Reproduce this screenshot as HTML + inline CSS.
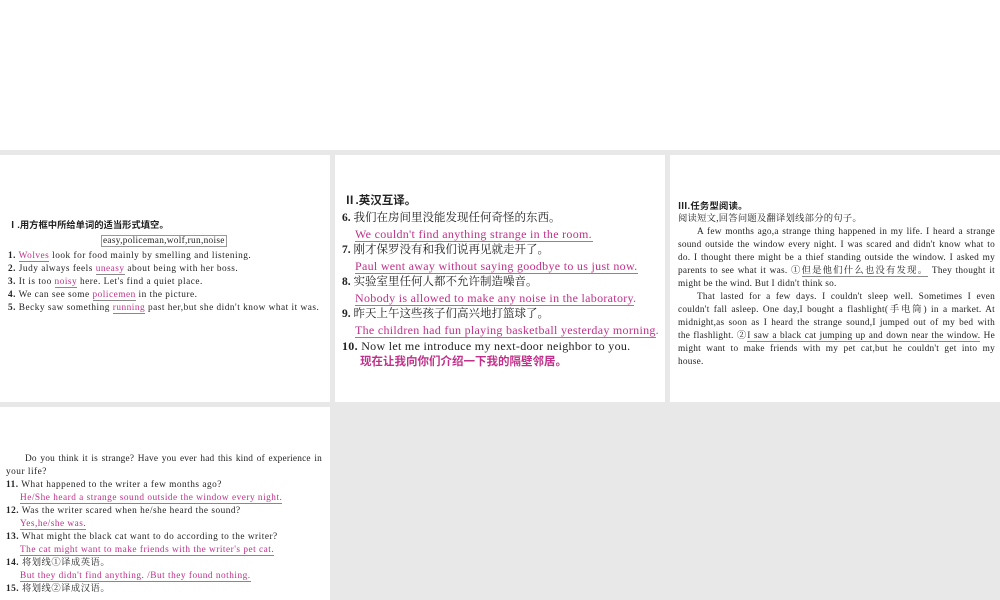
<!DOCTYPE html>
<html><head><meta charset="utf-8"><style>
*{margin:0;padding:0}
body{width:1000px;height:600px;background:#e8e8e8;position:relative;overflow:hidden;font-family:"Liberation Serif","Noto Serif CJK SC",serif;color:#222}
.p{position:absolute;background:#fff}
.l{position:absolute;white-space:nowrap;font-size:9.3px;line-height:10px;letter-spacing:0.25px}
.w .l{letter-spacing:0.5px}
.j{text-align:justify;text-align-last:justify;white-space:normal}
.m{color:#c0308a}
.u{border-bottom:1px solid #888}
b{font-family:"Liberation Serif","Noto Sans CJK SC",serif}
h{font-family:"Liberation Sans","Noto Sans CJK SC",sans-serif;font-weight:bold}
.big .l{font-size:11.5px;line-height:13px;letter-spacing:0}
.big .e{font-size:12px;letter-spacing:0.3px}
</style></head><body>
<div class="p" style="left:0;top:0;width:1000px;height:150px"></div>
<div class="p w" style="left:0;top:155px;width:330px;height:247px">
<div class="l" style="left:8px;top:65px;letter-spacing:0"><h>Ⅰ.用方框中所给单词的适当形式填空。</h></div>
<div class="l" style="left:101px;top:80px;border:1px solid #999;padding:0 1px;letter-spacing:0.3px">easy,policeman,wolf,run,noise</div>
<div class="l" style="left:8px;top:96px"><b>1.</b> <span class="m u">Wolves</span> look for food mainly by smelling and listening.</div>
<div class="l" style="left:8px;top:109px"><b>2.</b> Judy always feels <span class="m u">uneasy</span> about being with her boss.</div>
<div class="l" style="left:8px;top:122px"><b>3.</b> It is too <span class="m u">noisy</span> here. Let's find a quiet place.</div>
<div class="l" style="left:8px;top:135px"><b>4.</b> We can see some <span class="m u">policemen</span> in the picture.</div>
<div class="l" style="left:8px;top:148px"><b>5.</b> Becky saw something <span class="m u">running</span> past her,but she didn't know what it was.</div>
</div>
<div class="p big" style="left:335px;top:155px;width:330px;height:247px">
<div class="l" style="left:9px;top:40px"><h>Ⅱ.英汉互译。</h></div>
<div class="l" style="left:7px;top:57px"><b>6.</b> 我们在房间里没能发现任何奇怪的东西。</div>
<div class="l m u e" style="left:20px;top:73px;width:238px">We couldn't find anything strange in the room.</div>
<div class="l" style="left:7px;top:89px"><b>7.</b> 刚才保罗没有和我们说再见就走开了。</div>
<div class="l m u e" style="left:20px;top:105px;width:283px">Paul went away without saying goodbye to us just now.</div>
<div class="l" style="left:7px;top:121px"><b>8.</b> 实验室里任何人都不允许制造噪音。</div>
<div class="l m u e" style="left:20px;top:137px;width:279px">Nobody is allowed to make any noise in the laboratory.</div>
<div class="l" style="left:7px;top:153px"><b>9.</b> 昨天上午这些孩子们高兴地打篮球了。</div>
<div class="l m u e" style="left:20px;top:169px;width:301px">The children had fun playing basketball yesterday morning.</div>
<div class="l e" style="left:7px;top:185px"><b>10.</b> Now let me introduce my next-door neighbor to you.</div>
<div class="l m" style="left:25px;top:201px"><h>现在让我向你们介绍一下我的隔壁邻居。</h></div>
</div>
<div class="p" style="left:670px;top:155px;width:330px;height:247px">
<div class="l" style="left:8px;top:46px"><h>Ⅲ.任务型阅读。</h></div>
<div class="l" style="left:8px;top:59px">阅读短文,回答问题及翻译划线部分的句子。</div>
<div class="l j" style="left:27px;top:72px;width:298px">A few months ago,a strange thing happened in my life. I heard a strange</div>
<div class="l j" style="left:8px;top:85px;width:317px">sound outside the window every night. I was scared and didn't know what to</div>
<div class="l j" style="left:8px;top:98px;width:317px">do. I thought there might be a thief standing outside the window. I asked my</div>
<div class="l j" style="left:8px;top:111px;width:317px">parents to see what it was. ①<span class="u">但是他们什么也没有发现。</span> They thought it</div>
<div class="l" style="left:8px;top:124px">might be the wind. But I didn't think so.</div>
<div class="l j" style="left:27px;top:137px;width:298px">That lasted for a few days. I couldn't sleep well. Sometimes I even</div>
<div class="l j" style="left:8px;top:150px;width:317px">couldn't fall asleep. One day,I bought a flashlight(手电筒) in a market. At</div>
<div class="l j" style="left:8px;top:163px;width:317px">midnight,as soon as I heard the strange sound,I jumped out of my bed with</div>
<div class="l j" style="left:8px;top:176px;width:317px">the flashlight. ②<span class="u">I saw a black cat jumping up and down near the window.</span> He</div>
<div class="l j" style="left:8px;top:189px;width:317px">might want to make friends with my pet cat,but he couldn't get into my</div>
<div class="l" style="left:8px;top:202px">house.</div>
</div>
<div class="p w" style="left:0;top:407px;width:330px;height:193px">
<div class="l j" style="left:25px;top:47px;width:297px;letter-spacing:0.2px">Do you think it is strange? Have you ever had this kind of experience in</div>
<div class="l" style="left:6px;top:60px">your life?</div>
<div class="l" style="left:6px;top:73px"><b>11.</b> What happened to the writer a few months ago?</div>
<div class="l m u" style="left:20px;top:86px">He/She heard a strange sound outside the window every night.</div>
<div class="l" style="left:6px;top:99px"><b>12.</b> Was the writer scared when he/she heard the sound?</div>
<div class="l m u" style="left:20px;top:112px">Yes,he/she was.</div>
<div class="l" style="left:6px;top:125px"><b>13.</b> What might the black cat want to do according to the writer?</div>
<div class="l m u" style="left:20px;top:138px">The cat might want to make friends with the writer's pet cat.</div>
<div class="l" style="left:6px;top:151px"><b>14.</b> 将划线①译成英语。</div>
<div class="l m u" style="left:20px;top:164px">But they didn't find anything. /But they found nothing.</div>
<div class="l" style="left:6px;top:177px"><b>15.</b> 将划线②译成汉语。</div>
</div>
</body></html>
